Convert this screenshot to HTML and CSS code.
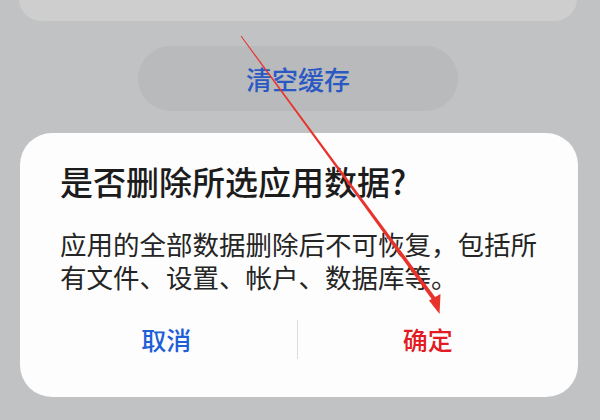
FILE: index.html
```html
<!DOCTYPE html>
<html lang="zh-CN">
<head>
<meta charset="utf-8">
<link rel="stylesheet" href="styles.css">
</head>
<body>
<div class="screen">
  <div class="top-card"></div>
  <div class="pill">清空缓存</div>
  <div class="dialog">
    <div class="title">是否删除所选应用数据?</div>
    <div class="message">应用的全部数据删除后不可恢复，包括所有文件、设置、帐户、数据库等。</div>
    <div class="actions">
      <div class="btn cancel">取消</div>
      <div class="divider"></div>
      <div class="btn confirm">确定</div>
    </div>
  </div>
  <svg class="arrow" width="600" height="420" viewBox="0 0 600 420">
    <polygon points="240.6,36.3 241.4,35.7 436.6,299.0 433.4,301.4" fill="#e8322c"/>
    <polygon points="429.0,300.5 440.5,294.0 439.5,314.0" fill="#e8322c"/>
  </svg>
</div>
</body>
</html>
```
FILE: styles.css
```css
html, body {
  margin: 0;
  padding: 0;
}
body {
  background: #c1c2c4;
  font-family: "Noto Sans CJK SC", "Noto Sans", sans-serif;
}
.screen {
  position: relative;
  width: 600px;
  height: 420px;
  overflow: hidden;
  display: flex;
  flex-direction: column;
}
.top-card {
  margin: -30px 0 0 19px;
  width: 558px;
  height: 51px;
  border-radius: 22px;
  background: #cececf;
  flex: none;
}
.pill {
  margin: 25px 0 0 138px;
  width: 320px;
  height: 65px;
  border-radius: 33px;
  background: #b9babb;
  color: #2b59c3;
  font-size: 26px;
  font-weight: 500;
  display: flex;
  align-items: center;
  justify-content: center;
  flex: none;
}
.dialog {
  margin: 22px 0 0 20px;
  width: 558px;
  height: 264px;
  border-radius: 32px;
  background: #fdfdfd;
  box-sizing: border-box;
  padding: 28px 30px 0 40px;
  flex: none;
  display: flex;
  flex-direction: column;
}
.title {
  font-size: 33px;
  line-height: 40px;
  font-weight: 500;
  color: #1c1c1c;
}
.message {
  margin-top: 26px;
  font-size: 26.5px;
  line-height: 33px;
  color: #252525;
}
.actions {
  margin: 16px -10px 0 -24px;
  height: 60px;
  display: flex;
  align-items: center;
}
.btn {
  flex: 1;
  text-align: center;
  font-size: 25px;
  font-weight: 500;
  line-height: 60px;
}
.cancel {
  color: #1f5fd6;
}
.confirm {
  color: #e31b22;
}
.divider {
  width: 1px;
  height: 39px;
  background: #dcdcdc;
}
.arrow {
  position: absolute;
  left: 0;
  top: 0;
  pointer-events: none;
}
```
